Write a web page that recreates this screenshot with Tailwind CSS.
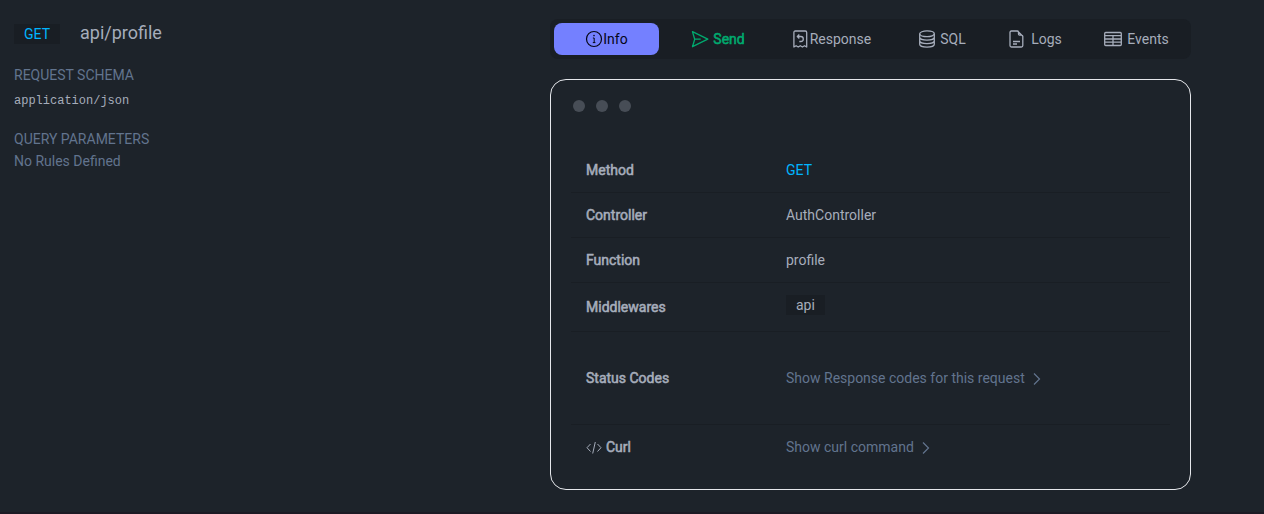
<!DOCTYPE html>
<html lang="en">
<head>
<meta charset="utf-8">
<meta name="viewport" content="width=device-width, initial-scale=1">
<title>api/profile</title>
<script src="https://cdn.jsdelivr.net/npm/@tailwindcss/browser@4"></script>
</head>
<body class="min-h-screen flex flex-col bg-[#1d232a] font-['Roboto',sans-serif] text-sm text-[#a6adbb]">
<main class="grow flex items-start">
  <section class="flex-1 pl-3.5 pt-[21px]">
    <div class="flex items-center gap-5">
      <span class="mt-0.5 px-2.5 bg-[#191e24] text-[#00b5ff]">GET</span>
      <h1 class="text-lg leading-6">api/profile</h1>
    </div>
    <h2 class="mt-5 leading-5 text-slate-500">REQUEST SCHEMA</h2>
    <p class="mt-2 font-['Liberation_Mono',monospace] text-xs leading-4">application/json</p>
    <h2 class="mt-5 leading-5 text-slate-500">QUERY PARAMETERS</h2>
    <p class="mt-0.5 text-slate-500">No Rules Defined</p>
  </section>
  <section class="w-[714px] pr-[73px] pt-[19px]">
    <nav class="flex p-1 h-10 rounded-lg bg-[#191e24]">
      <button class="w-[105px] flex items-center justify-center rounded-lg bg-[#7480ff] text-[#050617]">
        <svg class="size-[18px]" viewBox="0 0 18 18" fill="none" stroke="currentColor"><circle cx="9" cy="9" r="7.5" stroke-width="1.2"/><path d="M7.900 8H9.200v4.600M7.800 12.600h2.600" stroke-width="1"/><circle cx="9" cy="5.600" r=".8" fill="currentColor" stroke="none"/></svg>Info
      </button>
      <button class="w-[118px] flex items-center justify-center gap-1 text-[#00a96e] [-webkit-text-stroke:0.04em]">
        <svg class="size-[18px]" viewBox="0 0 18 18" fill="none" stroke="currentColor" stroke-width="1.3" stroke-linejoin="round"><path d="M1.500 1.700 16.800 9.200 1.500 16.700 3.700 9.200zM3.700 9.200h6"/></svg>Send
      </button>
      <button class="w-[109px] flex items-center justify-center">
        <svg class="size-[18px]" viewBox="0 0 18 18" fill="none" stroke="currentColor" stroke-width="1.3" stroke-linejoin="round"><path d="M1.900 17V2.500Q1.900 1 3.300 1h10q1.400 0 1.400 1.500V17l-2.200-1.300-2.100 1.300-2.100-1.300L6.200 17l-2.100-1.300zM7.300 4.500l-2 2 2 2M5.300 6.500h3.500a2.500 2.500 0 0 1 0 5H7.300"/></svg>Response
      </button>
      <button class="w-[112px] flex items-center justify-center gap-1">
        <svg class="size-[18px]" viewBox="0 0 18 18" fill="none" stroke="currentColor" stroke-width="1.3"><ellipse cx="9" cy="3.800" rx="7.300" ry="2.900"/><path d="M1.700 3.800v10.400c0 1.600 3.300 2.900 7.300 2.900s7.300-1.300 7.300-2.900V3.800M1.700 7.300c0 1.600 3.300 2.900 7.300 2.900s7.300-1.300 7.300-2.900M1.700 10.700c0 1.600 3.300 2.900 7.300 2.900s7.300-1.300 7.300-2.900"/></svg>SQL
      </button>
      <button class="w-[74px] flex items-center justify-center gap-[5px]">
        <svg class="size-[18px]" viewBox="0 0 18 18" fill="none" stroke="currentColor" stroke-width="1.3" stroke-linejoin="round"><path d="M9.500 1H3.400Q2 1 2 2.500v13Q2 17 3.400 17h10q1.400 0 1.400-1.500V6.300zq1 0 1 1.500v1.600q0 1 1 1h1.700q1.600 0 1.600 1.200M5 11.500h7M5 14h4"/></svg>Logs
      </button>
      <button class="grow pl-3.5 flex items-center justify-center gap-[5px]">
        <svg class="size-[18px]" viewBox="0 0 18 18" fill="none" stroke="currentColor" stroke-width="1.300"><rect x=".7" y="2.500" width="16.600" height="13" rx="1"/><path d="M.6 5.700h16.800M.6 9h16.800M.6 12.200h16.800M9 5.700v9.800"/></svg>Events
      </button>
    </nav>
    <div class="mt-5 p-5 border border-[#e5e7eb] rounded-2xl">
      <div class="flex gap-[11px] px-0.5">
        <span class="size-3 rounded-full bg-[#474d56]"></span><span class="size-3 rounded-full bg-[#474d56]"></span><span class="size-3 rounded-full bg-[#474d56]"></span>
      </div>
      <table class="mt-9 w-full text-left">
        <tbody>
          <tr class="h-11 border-b border-[#191e24]"><th class="w-[200px] px-[15px] font-normal [-webkit-text-stroke:0.04em]">Method</th><td class="px-[15px] text-[#00b5ff]">GET</td></tr>
          <tr class="h-[45px] border-b border-[#191e24]"><th class="px-[15px] font-normal [-webkit-text-stroke:0.04em]">Controller</th><td class="px-[15px]">AuthController</td></tr>
          <tr class="h-[45px] border-b border-[#191e24]"><th class="px-[15px] font-normal [-webkit-text-stroke:0.04em]">Function</th><td class="px-[15px]">profile</td></tr>
          <tr class="h-[49px] border-b border-[#191e24]"><th class="px-[15px] font-normal [-webkit-text-stroke:0.04em]">Middlewares</th><td class="px-[15px] pb-1"><span class="inline-block px-2.5 bg-[#191e24]">api</span></td></tr>
          <tr class="h-[93px] border-b border-[#191e24]"><th class="px-[15px] font-normal [-webkit-text-stroke:0.04em]">Status Codes</th><td class="px-[15px]"><button class="flex items-center gap-1 text-slate-500">Show Response codes for this request <svg class="size-4" viewBox="0 0 16 16" fill="none" stroke="currentColor" stroke-width="1.200"><path d="m5 3.500 5.500 5.500-5.500 5.500"/></svg></button></td></tr>
          <tr class="h-[45px]"><th class="px-[15px] font-normal [-webkit-text-stroke:0.04em]"><span class="flex items-center gap-1"><svg class="size-4" viewBox="0 0 16 16" fill="none" stroke="currentColor"><path d="M4.500 5 1 8.700l3.500 3.800M11.500 5 15 8.700l-3.500 3.800M9.300 3 6.700 14.500"/></svg>Curl</span></th><td class="px-[15px]"><button class="flex items-center gap-1 text-slate-500">Show curl command <svg class="size-4" viewBox="0 0 16 16" fill="none" stroke="currentColor" stroke-width="1.200"><path d="m5 3.500 5.500 5.500-5.500 5.500"/></svg></button></td></tr>
        </tbody>
      </table>
    </div>
  </section>
</main>
<footer class="h-0.5 bg-[#1c1a24]"></footer>
</body>
</html>
